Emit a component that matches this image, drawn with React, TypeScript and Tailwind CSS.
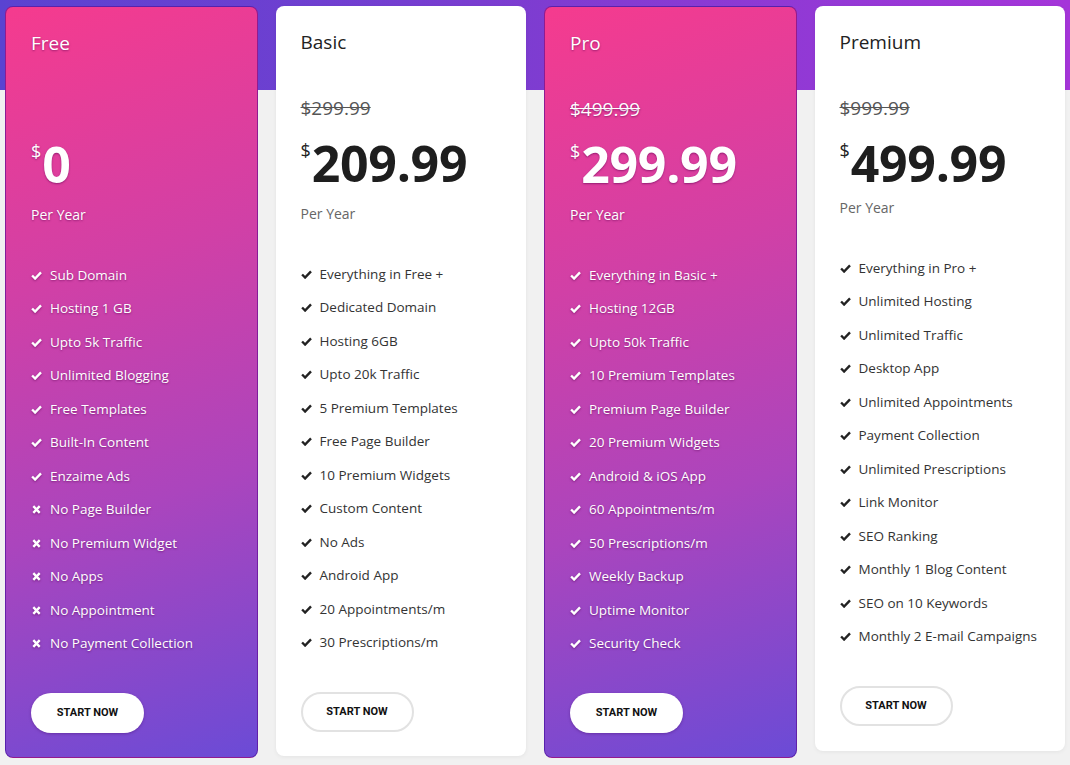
import React from "react";

type Item = { t: string; x?: boolean };
type Plan = {
  name: string;
  old: string | null;
  price: string;
  grad: boolean;
  shift?: boolean;
  items: Item[];
};

const plans: Plan[] = [
  {
    name: "Free",
    old: null,
    price: "0",
    grad: true,
    items: [
      { t: "Sub Domain" },
      { t: "Hosting 1 GB" },
      { t: "Upto 5k Traffic" },
      { t: "Unlimited Blogging" },
      { t: "Free Templates" },
      { t: "Built-In Content" },
      { t: "Enzaime Ads" },
      { t: "No Page Builder", x: true },
      { t: "No Premium Widget", x: true },
      { t: "No Apps", x: true },
      { t: "No Appointment", x: true },
      { t: "No Payment Collection", x: true },
    ],
  },
  {
    name: "Basic",
    old: "$299.99",
    price: "209.99",
    grad: false,
    items: [
      { t: "Everything in Free +" },
      { t: "Dedicated Domain" },
      { t: "Hosting 6GB" },
      { t: "Upto 20k Traffic" },
      { t: "5 Premium Templates" },
      { t: "Free Page Builder" },
      { t: "10 Premium Widgets" },
      { t: "Custom Content" },
      { t: "No Ads" },
      { t: "Android App" },
      { t: "20 Appointments/m" },
      { t: "30 Prescriptions/m" },
    ],
  },
  {
    name: "Pro",
    old: "$499.99",
    price: "299.99",
    grad: true,
    items: [
      { t: "Everything in Basic +" },
      { t: "Hosting 12GB" },
      { t: "Upto 50k Traffic" },
      { t: "10 Premium Templates" },
      { t: "Premium Page Builder" },
      { t: "20 Premium Widgets" },
      { t: "Android & iOS App" },
      { t: "60 Appointments/m" },
      { t: "50 Prescriptions/m" },
      { t: "Weekly Backup" },
      { t: "Uptime Monitor" },
      { t: "Security Check" },
    ],
  },
  {
    name: "Premium",
    old: "$999.99",
    price: "499.99",
    grad: false,
    shift: true,
    items: [
      { t: "Everything in Pro +" },
      { t: "Unlimited Hosting" },
      { t: "Unlimited Traffic" },
      { t: "Desktop App" },
      { t: "Unlimited Appointments" },
      { t: "Payment Collection" },
      { t: "Unlimited Prescriptions" },
      { t: "Link Monitor" },
      { t: "SEO Ranking" },
      { t: "Monthly 1 Blog Content" },
      { t: "SEO on 10 Keywords" },
      { t: "Monthly 2 E-mail Campaigns" },
    ],
  },
];

function CheckIcon() {
  return (
    <svg width="11" height="9" viewBox="0 0 11 9" className="shrink-0">
      <path
        d="M1.1 4.5 L4.1 7.5 L10 1.3"
        fill="none"
        stroke="currentColor"
        strokeWidth="2.4"
        strokeLinejoin="miter"
      />
    </svg>
  );
}

function CrossIcon() {
  return (
    <svg width="11" height="9" viewBox="0 0 11 9" className="shrink-0">
      <path
        d="M2.3 1.2 L8.7 7.8 M8.7 1.2 L2.3 7.8"
        fill="none"
        stroke="currentColor"
        strokeWidth="2.4"
      />
    </svg>
  );
}

function Card({ p }: { p: Plan }) {
  const g = p.grad;
  const shadow = g ? "[text-shadow:0_1px_2px_rgba(90,0,80,0.55)]" : "";
  return (
    <div
      className={
        "flex-1 flex flex-col rounded-lg pl-[25px] pr-[20px] pt-[22px] " +
        (p.shift ? "pb-[25px] " : "pb-[24px] ") +
        (g
          ? "bg-[linear-gradient(162deg,#f53b8e_0%,#d140a6_35%,#ab45bd_65%,#6b4bd6_100%)] border border-[rgba(70,0,140,0.55)] text-white"
          : "bg-white shadow-[0_1px_4px_rgba(0,0,0,0.06)] text-[#333]")
      }
    >
      <div
        className={
          "h-[28px] leading-[28px] text-[19px] " +
          (g ? "text-white " : "text-[#222] ") +
          shadow
        }
      >
        {p.name}
      </div>
      <div
        className={
          "mt-[39px] h-[26px] leading-[26px] text-[19px] line-through " +
          (g ? "text-white [text-shadow:0_1px_2px_rgba(90,0,80,0.6)]" : "text-[#555]")
        }
      >
        {p.old ?? ""}
      </div>
      <div className={"mt-[14px] flex items-start h-[56px] " + shadow}>
        <span
          className={
            "text-[18px] leading-[22px] mt-[4px] mr-[1px] " +
            (g ? "text-white" : "text-[#222]")
          }
        >
          $
        </span>
        <span
          className={
            "text-[50px] leading-[56px] font-bold tracking-[-0.3px] " +
            (g ? "text-white" : "text-[#1e1e1e]")
          }
        >
          {p.price}
        </span>
      </div>
      <div
        className={
          (p.shift ? "mt-[7px] " : "mt-[13px] ") +
          "h-[20px] leading-[20px] text-[14px] " +
          (g ? "text-white " : "text-[#666] ") +
          shadow
        }
      >
        Per Year
      </div>
      <ul className="mt-[33px] flex flex-col">
        {p.items.map((it) => (
          <li
            key={it.t}
            className={
              "h-[33.5px] flex items-center gap-[8px] text-[13.5px] " +
              (g ? "text-white " : "text-[#333] ")
            }
          >
            <span
              className={
                "w-[11px] flex items-center mt-[1px] " +
                (g ? "text-white drop-shadow-[0_1px_1px_rgba(90,0,80,0.5)]" : "text-[#222]")
              }
            >
              {it.x ? <CrossIcon /> : <CheckIcon />}
            </span>
            <span className={shadow}>{it.t}</span>
          </li>
        ))}
      </ul>
      <div className="mt-[33px]">
        <button
          className={
            "w-[113px] h-[40px] rounded-full bg-white text-[11px] font-bold text-[#111] [font-family:Roboto,'Liberation_Sans',sans-serif] " +
            (g
              ? "shadow-[0_1px_3px_rgba(60,0,90,0.35)]"
              : "border-2 border-[#e2e2e2]")
          }
        >
          START NOW
        </button>
      </div>
    </div>
  );
}

export default function App() {
  return (
    <div className="min-h-[765px] w-full bg-[#f1f1f1] bg-[image:linear-gradient(90deg,#5a43d1_0%,#7a3dd0_45%,#a535d9_100%)] bg-no-repeat bg-[length:100%_90px] [font-family:'Open_Sans','Noto_Sans',sans-serif]">
      <div className="flex items-start gap-[18px] px-[5px] pt-[6px]">
        {plans.map((p) => (
          <Card key={p.name} p={p} />
        ))}
      </div>
    </div>
  );
}
